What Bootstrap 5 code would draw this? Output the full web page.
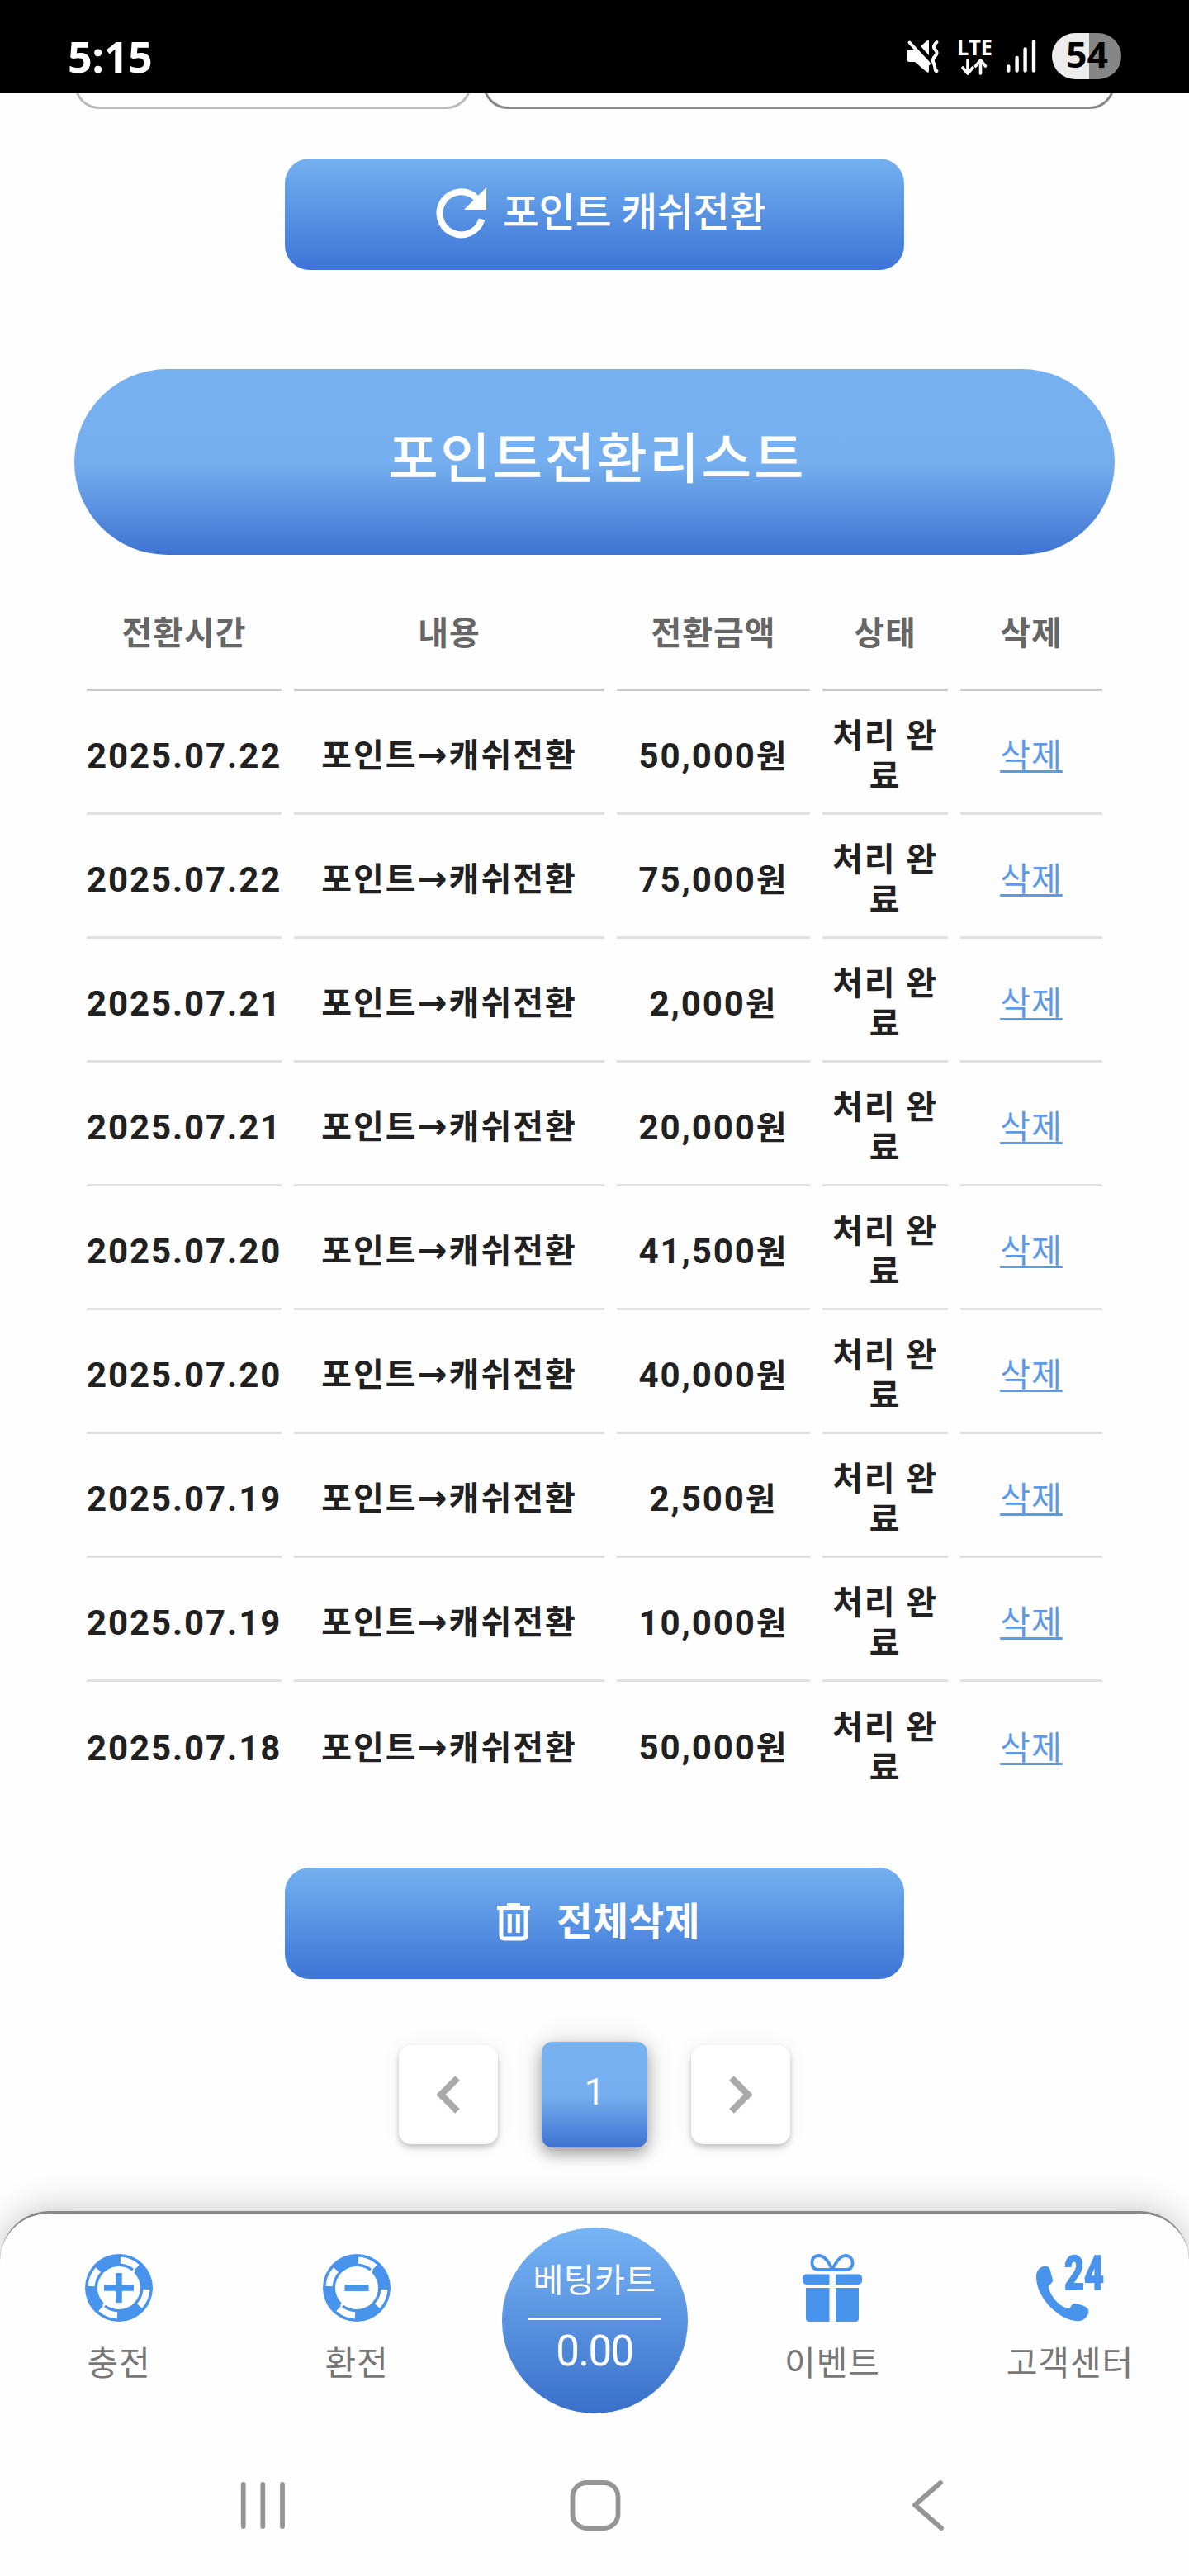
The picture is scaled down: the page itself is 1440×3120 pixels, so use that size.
<!DOCTYPE html>
<html lang="ko">
<head>
<meta charset="utf-8">
<meta name="viewport" content="width=device-width, initial-scale=1">
<title>포인트전환리스트</title>
<link href="https://cdn.jsdelivr.net/npm/bootstrap@5.3.0/dist/css/bootstrap.min.css" rel="stylesheet">
<style>
body{font-family:Roboto,"Noto Sans CJK KR",sans-serif;color:#212121;background:#fefefe;line-height:48px;font-size:40px}
svg{display:block;flex:none}
.screen{width:1440px;height:3120px;overflow:hidden;background:#fefefe}
.statusbar{height:113px;background:#000;color:#fff;padding:24px 82px 0 82px}
.clock{font-family:"Open Sans",sans-serif;font-weight:700;font-size:52px;line-height:88px;letter-spacing:-.4px}
.status-icons{height:88px}
.fields{height:19px;overflow:hidden;padding:0 90px;gap:14px;align-items:flex-end}
.field-box{height:90px;border:3px solid #bbb;border-radius:30px}
.field-unit{width:481px}
.field-amount{border-color:#888}
.wide-btn{width:750px;height:135px;border-radius:30px;background:linear-gradient(#75b0ef,#69a6eb 18%,#3d74d6);color:#fff;border:0}
.btn-convert{margin-top:60px;font-size:48px;font-weight:500;gap:19px;padding:0 0 4px 15px;letter-spacing:-.3px}
.list-title{height:225px;margin:120px 90px 0;border-radius:113px;background:linear-gradient(#78b1f0,#76afef 50%,#3f73d2);color:#fff;font-size:66px;font-weight:500;letter-spacing:2.5px;line-height:90px;padding:0 0 5px 6px}
.list-table{width:1260px;margin:0 90px;table-layout:fixed;border-collapse:separate;border-spacing:15px 0;text-align:center;font-weight:700;letter-spacing:1.8px;line-height:49px}
.list-table th{height:165px;border-bottom:3px solid #ccc;color:#666;padding:29px 0 0;letter-spacing:.9px}
.list-table td{height:150px;border-bottom:3px solid #e0e0e0;padding:10px 0 0;vertical-align:middle}
.list-table tr:last-child td{border-bottom:0}
.figures{font-size:42px;white-space:nowrap;letter-spacing:1.9px}
.hangul{font-size:40px}
.list-table .desc{letter-spacing:2px;white-space:nowrap}
.to-arrow{font-family:"DejaVu Sans",sans-serif;font-size:43px;line-height:1}
.list-table .state{letter-spacing:1.8px}
.list-table a{color:#5c9ae8;font-weight:400;text-decoration:underline;text-decoration-thickness:3px;text-underline-offset:4px;letter-spacing:1px}
.btn-clear{margin-top:75px;font-size:47px;font-weight:700;gap:31px;padding:0 0 4px 9px;letter-spacing:.1px}
.pager{margin-top:76px;height:128px;gap:53px}
.pager-btn{width:120px;height:120px;border-radius:15px;background:#fff;box-shadow:0 4px 7px rgba(0,0,0,.22),0 0 24px rgba(0,0,0,.06)}
.pager-on{width:128px;height:128px;border-radius:13px;background:linear-gradient(#78b1f0,#76afef 50%,#3f73d2);color:#fff;font-size:44px;padding-bottom:6px;box-shadow:0 8px 17px rgba(0,0,0,.32),0 0 34px rgba(0,0,0,.14)}
.dock{margin-top:77px;height:442px;border-top:3px solid #888;border-radius:60px 60px 0 0;background:#fefefe;box-shadow:0 -4px 42px rgba(0,0,0,.2)}
.dock-item{width:288px;padding-top:49px;color:#777;font-size:41px;letter-spacing:.9px}
.dock-item svg{margin-bottom:27px}
.cart{width:225px;height:225px;margin-top:17px;border-radius:50%;background:linear-gradient(#78b5f6,#3a70ca);color:#fff}
.cart-name{font-size:40px;padding-top:41px;letter-spacing:.4px;line-height:48px}
.cart-line{width:160px;height:3px;background:#fff;margin-top:20px}
.cart-sum{font-size:51px;line-height:60px;margin-top:8px;letter-spacing:-1.5px}
.dock-row{height:259px}
.sysnav{height:180px}
</style>
</head>
<body>
<div class="screen">
  <header class="statusbar d-flex justify-content-between">
    <div class="clock">5:15</div>
    <svg class="status-icons" width="280" height="88" viewBox="1078 24 280 88">
      <g fill="#fff">
        <path d="M1102 60h6l17 16v10q0 3-3 1l-14-12h-6q-4 0-4-4v-7q0-4 4-4z"/>
        <path d="M1115 56l8-7q2-1 2 1v17z"/>
        <path d="M1108 61l17 13v10l-17-15z"/>
      </g>
      <path d="M1101.500 51.500L1125 77" stroke="#fff" stroke-width="4" stroke-linecap="round"/>
      <path d="M1134.500 51q-6 5-2 9t0 8-2 8 2 7 2 3" fill="none" stroke="#fff" stroke-width="4" stroke-linecap="round" stroke-linejoin="round"/>
      <text x="1159" y="66.500" textLength="43" lengthAdjust="spacingAndGlyphs" font-family="Open Sans" font-weight="700" font-size="27" fill="#fff">LTE</text>
      <path d="M1172 73v16m-6-7l6 7 6-7M1187.500 89V73m-6 7l6-7 6 7" fill="none" stroke="#fff" stroke-width="3.600" stroke-linecap="round" stroke-linejoin="round"/>
      <path d="M1221.300 80.500v5M1231.600 70v15.500M1241.600 59.500v26M1252 50.500v35" stroke="#fff" stroke-width="4.400" stroke-linecap="round"/>
      <path d="M1319 40h-17a28 28 0 0 0 0 56h17z" fill="#ececec"/>
      <path d="M1319 40h11a28 28 0 0 1 0 56h-11z" fill="#868686"/>
      <text x="1291" y="82" textLength="51" lengthAdjust="spacingAndGlyphs" font-family="Open Sans" font-weight="700" font-size="43" fill="#000">54</text>
    </svg>
  </header>

  <div class="fields d-flex">
    <div class="field-box field-unit"></div>
    <div class="field-box field-amount flex-grow-1"></div>
  </div>

  <button class="wide-btn btn-convert d-flex align-items-center justify-content-center mx-auto" type="button">
    <svg width="62" height="62" viewBox="0 0 62 62">
      <path d="M55.500 38.500A26 26 0 1 1 49 13" fill="none" stroke="#fff" stroke-width="8"/>
      <path d="M61 0v27H34z" fill="#fff"/>
    </svg>
    <span>포인트 캐쉬전환</span>
  </button>

  <h1 class="list-title d-flex align-items-center justify-content-center mb-0">포인트전환리스트</h1>

  <table class="list-table">
    <colgroup><col style="width:236px"><col style="width:376px"><col style="width:234px"><col style="width:152px"><col></colgroup>
    <thead><tr><th>전환시간</th><th>내용</th><th>전환금액</th><th>상태</th><th>삭제</th></tr></thead>
    <tbody>
      <tr><td class="figures">2025.07.22</td><td class="desc">포인트<span class="to-arrow">→</span>캐쉬전환</td><td class="figures">50,000<span class="hangul">원</span></td><td class="state">처리 완료</td><td><a href="#">삭제</a></td></tr>
      <tr><td class="figures">2025.07.22</td><td class="desc">포인트<span class="to-arrow">→</span>캐쉬전환</td><td class="figures">75,000<span class="hangul">원</span></td><td class="state">처리 완료</td><td><a href="#">삭제</a></td></tr>
      <tr><td class="figures">2025.07.21</td><td class="desc">포인트<span class="to-arrow">→</span>캐쉬전환</td><td class="figures">2,000<span class="hangul">원</span></td><td class="state">처리 완료</td><td><a href="#">삭제</a></td></tr>
      <tr><td class="figures">2025.07.21</td><td class="desc">포인트<span class="to-arrow">→</span>캐쉬전환</td><td class="figures">20,000<span class="hangul">원</span></td><td class="state">처리 완료</td><td><a href="#">삭제</a></td></tr>
      <tr><td class="figures">2025.07.20</td><td class="desc">포인트<span class="to-arrow">→</span>캐쉬전환</td><td class="figures">41,500<span class="hangul">원</span></td><td class="state">처리 완료</td><td><a href="#">삭제</a></td></tr>
      <tr><td class="figures">2025.07.20</td><td class="desc">포인트<span class="to-arrow">→</span>캐쉬전환</td><td class="figures">40,000<span class="hangul">원</span></td><td class="state">처리 완료</td><td><a href="#">삭제</a></td></tr>
      <tr><td class="figures">2025.07.19</td><td class="desc">포인트<span class="to-arrow">→</span>캐쉬전환</td><td class="figures">2,500<span class="hangul">원</span></td><td class="state">처리 완료</td><td><a href="#">삭제</a></td></tr>
      <tr><td class="figures">2025.07.19</td><td class="desc">포인트<span class="to-arrow">→</span>캐쉬전환</td><td class="figures">10,000<span class="hangul">원</span></td><td class="state">처리 완료</td><td><a href="#">삭제</a></td></tr>
      <tr><td class="figures">2025.07.18</td><td class="desc">포인트<span class="to-arrow">→</span>캐쉬전환</td><td class="figures">50,000<span class="hangul">원</span></td><td class="state">처리 완료</td><td><a href="#">삭제</a></td></tr>
    </tbody>
  </table>

  <button class="wide-btn btn-clear d-flex align-items-center justify-content-center mx-auto" type="button">
    <svg width="42" height="46" viewBox="0 0 42 46">
      <path d="M13 0h16v3h12v5H1V3h12z" fill="#fff"/>
      <path d="M6 7v32q0 4 4 4h22q4 0 4-4V7" fill="none" stroke="#fff" stroke-width="5"/>
      <path d="M16.300 13v23M26.300 13v23" stroke="#fff" stroke-width="5"/>
    </svg>
    <span>전체삭제</span>
  </button>

  <nav class="pager d-flex align-items-center justify-content-center">
    <a class="pager-btn d-flex align-items-center justify-content-center" href="#" aria-label="이전"><svg width="28" height="46" viewBox="0 0 28 46"><path d="M25 3L5 23l20 20" fill="none" stroke="#aaa" stroke-width="8"/></svg></a>
    <a class="pager-on d-flex align-items-center justify-content-center text-decoration-none" href="#">1</a>
    <a class="pager-btn d-flex align-items-center justify-content-center" href="#" aria-label="다음"><svg width="28" height="46" viewBox="0 0 28 46"><path d="M3 3l20 20L3 43" fill="none" stroke="#aaa" stroke-width="8"/></svg></a>
  </nav>

  <footer class="dock">
    <div class="dock-row d-flex">
      <div class="dock-item d-flex flex-column align-items-center">
        <svg width="82" height="82" viewBox="0 0 82 82">
          <circle cx="41" cy="41" r="41" fill="#4893ec"/>
          <g fill="none" stroke="#fff" stroke-width="8"><path d="M43 7.500A33.500 33.500 0 0 1 63 16M74.500 43A33.500 33.500 0 0 1 66 63M39 74.500A33.500 33.500 0 0 1 19 66M7.500 39A33.500 33.500 0 0 1 16 19"/></g>
          <circle cx="41" cy="41" r="26" fill="#fff"/>
          <path d="M60 19l-4 5M22 63l4-5" stroke="#fff" stroke-width="3"/>
          <path d="M41 23v36M23 41h36" stroke="#4893ec" stroke-width="7.500"/>
        </svg>
        <span>충전</span>
      </div>
      <div class="dock-item d-flex flex-column align-items-center">
        <svg width="82" height="82" viewBox="0 0 82 82">
          <circle cx="41" cy="41" r="41" fill="#4893ec"/>
          <g fill="none" stroke="#fff" stroke-width="8"><path d="M43 7.500A33.500 33.500 0 0 1 63 16M74.500 43A33.500 33.500 0 0 1 66 63M39 74.500A33.500 33.500 0 0 1 19 66M7.500 39A33.500 33.500 0 0 1 16 19"/></g>
          <circle cx="41" cy="41" r="26" fill="#fff"/>
          <path d="M60 19l-4 5M22 63l4-5" stroke="#fff" stroke-width="3"/>
          <path d="M26.500 41h29" stroke="#4893ec" stroke-width="8"/>
        </svg>
        <span>환전</span>
      </div>
      <div class="dock-item d-flex justify-content-center pt-0">
        <div class="cart d-flex flex-column align-items-center">
          <div class="cart-name">베팅카트</div>
          <div class="cart-line"></div>
          <div class="cart-sum">0.00</div>
        </div>
      </div>
      <div class="dock-item d-flex flex-column align-items-center">
        <svg width="72" height="82" viewBox="0 0 72 82">
          <path d="M36 19C31 8 26 2 20 2 13 2 11 7 11.500 12 12 17 15 19 20 19H52C57 19 60 17 60.500 12 61 7 58 2 52 2 46 2 41 8 36 19z" fill="none" stroke="#4893ec" stroke-width="3.800" stroke-linejoin="round"/>
          <path d="M4 24.500h28.500V37H4q-4-1-4-5v-3q0-4 4-4.500zM40 24.500h28q4 .5 4 4.500v3q0 4-4 5H40zM4 41h28.500v41H8q-4 0-4-4zM40 41h28v37q0 4-4 4H40z" fill="#4893ec"/>
        </svg>
        <span>이벤트</span>
      </div>
      <div class="dock-item d-flex flex-column align-items-center">
        <svg width="82" height="82" viewBox="0 0 82 82">
          <path d="M9 15c5-1 7 1 8 5 1 5 3 9 3 13-2 4-5 4-5 7 2 12 15 25 24 26 4 0 2-6 8-6 5 1 10 2 14 5 4 3 2 9-1 12-7 8-21 3-31-3C11 62-1 43 0 25 1 20 4 16 9 15z" fill="#4893ec"/>
          <text x="34" y="43" textLength="48" lengthAdjust="spacingAndGlyphs" font-family="Roboto" font-weight="900" font-size="58" letter-spacing="0" fill="#4893ec" stroke="#4893ec" stroke-width="1.500">24</text>
        </svg>
        <span>고객센터</span>
      </div>
    </div>
    <svg class="sysnav" width="1440" height="180" viewBox="0 2940 1440 180" fill="none" stroke="#959595" stroke-width="5.800" stroke-linecap="round" stroke-linejoin="round">
      <path d="M294.700 3009v51M318.300 3009v51M342 3009v51"/>
      <rect x="693.500" y="3007" width="55" height="55" rx="17"/>
      <path d="M1139 3007l-31 27 32 28"/>
    </svg>
  </footer>
</div>
<script src="https://cdn.jsdelivr.net/npm/bootstrap@5.3.0/dist/js/bootstrap.bundle.min.js"></script>
</body>
</html>
